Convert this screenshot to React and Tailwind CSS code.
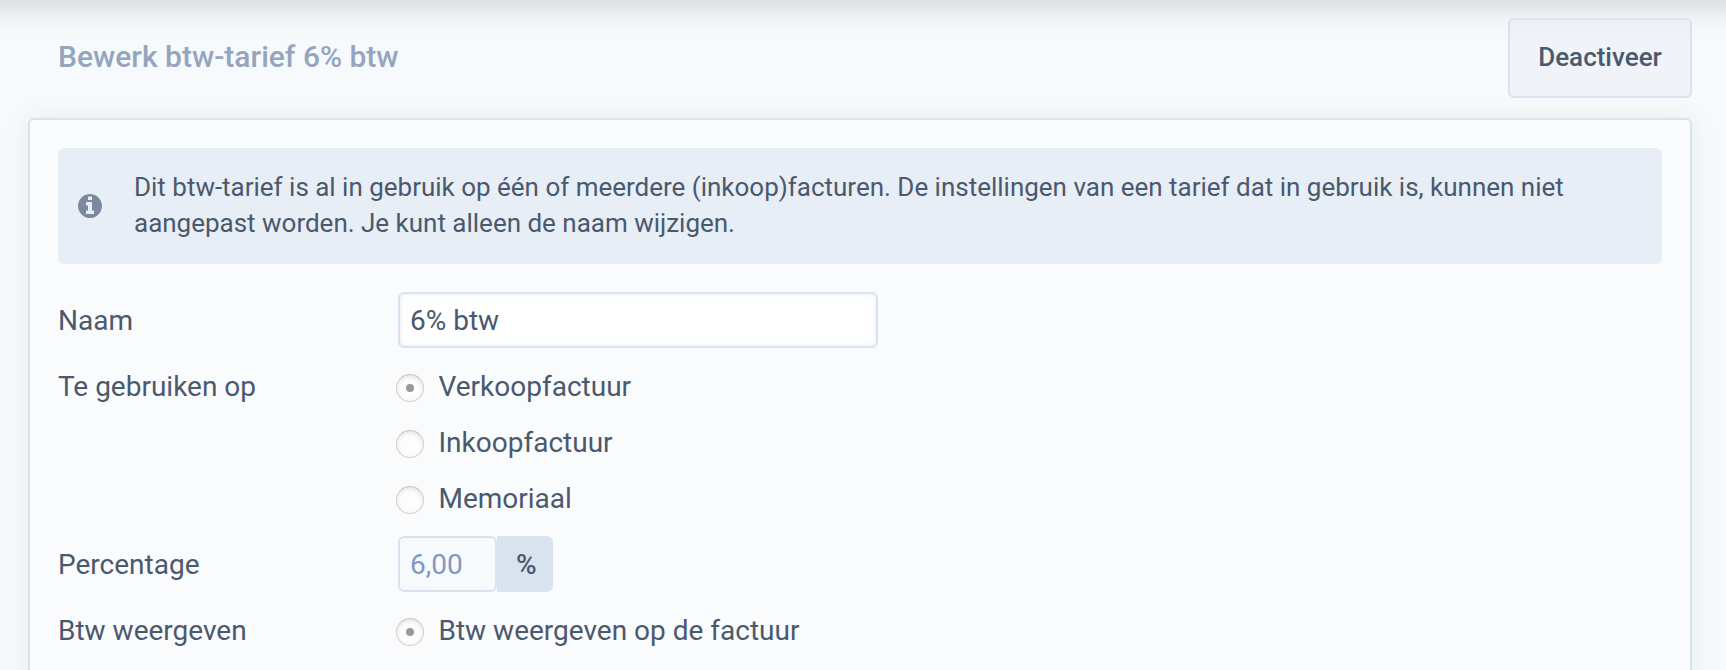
function InfoIcon() {
  return (
    <svg className="size-6 shrink-0 fill-[#7b899f]" viewBox="128 128 1536 1536" aria-hidden="true">
      <path d="M1152 1376v-160q0-14-9-23t-23-9h-96v-512q0-14-9-23t-23-9h-320q-14 0-23 9t-9 23v160q0 14 9 23t23 9h96v320h-96q-14 0-23 9t-9 23v160q0 14 9 23t23 9h448q14 0 23-9t9-23zm-128-896v-160q0-14-9-23t-23-9h-192q-14 0-23 9t-9 23v160q0 14 9 23t23 9h192q14 0 23-9t9-23zm640 416q0 209-103 385.5t-279.5 279.5-385.5 103-385.5-103-279.5-279.5-103-385.5 103-385.5 279.5-279.5 385.5-103 385.5 103 279.5 279.5 103 385.5z" />
    </svg>
  );
}

function Row({ label, children }) {
  return (
    <div className="flex">
      <div className="h-14 w-[340px] shrink-0 leading-[58px]">{label}</div>
      <div>{children}</div>
    </div>
  );
}

function Radio({ label, checked = false }) {
  return (
    <label className="flex h-14 items-center">
      <span className="-ml-0.5 mt-1 mr-[14.5px] flex size-7 items-center justify-center rounded-full border border-[#d0d0d0] border-t-[#c4c4c4] bg-[#fdfdfd] shadow-[inset_0_2px_4px_rgba(0,0,0,0.1)]">
        {checked && <span className="size-2 rounded-full bg-[#999999]" />}
      </span>
      <span className="h-14 leading-[58px]">{label}</span>
    </label>
  );
}

export default function App() {
  return (
    <div className="h-[670px] overflow-hidden bg-[#f6fafd] bg-[linear-gradient(to_bottom,rgba(50,40,45,0.125)_0px,rgba(50,45,50,0.1)_6px,rgba(55,55,55,0.055)_14px,rgba(60,60,60,0.022)_24px,transparent_38px)] pt-[18px] pr-[34px] pl-7 font-['Roboto',sans-serif] text-[28px] text-[#4a596d]">
      <header className="flex h-20 items-center justify-between pl-[30px]">
        <h1 className="pb-0.5 text-[30px] leading-9 font-medium text-[#95a5bd]">Bewerk btw-tarief 6% btw</h1>
        <button className="h-20 w-[184px] rounded-md border-2 border-[#d9e2f0] bg-linear-to-b from-[#edeff4] to-[#f0f3f8] to-30% pb-0.5 text-[26px] font-medium">
          Deactiveer
        </button>
      </header>

      <main className="mt-5 h-[700px] rounded-md border-2 border-[#d9e3f0] bg-[#fafbfd] p-7 shadow-[0_0_24px_rgba(90,110,110,0.1)]">
        <div className="flex h-[116px] items-center rounded-md bg-[#e7eef6] pl-5 text-[26px] leading-9 tracking-[-0.01px]">
          <InfoIcon />
          <p className="ml-8 w-[1450px] pb-0.5">
            Dit btw-tarief is al in gebruik op één of meerdere (inkoop)facturen. De instellingen van een tarief dat in gebruik is, kunnen niet aangepast worden. Je kunt alleen de naam wijzigen.
          </p>
        </div>

        <form className="mt-7 flex flex-col gap-2.5">
          <Row label="Naam">
            <input
              className="block h-14 w-[480px] rounded-md border-2 border-[#d9e3f0] bg-white px-2.5 shadow-[inset_0_0_4px_rgba(0,0,0,0.1)] outline-none"
              defaultValue="6% btw"
            />
          </Row>
          <Row label="Te gebruiken op">
            <Radio label="Verkoopfactuur" checked />
            <Radio label="Inkoopfactuur" />
            <Radio label="Memoriaal" />
          </Row>
          <Row label="Percentage">
            <div className="flex">
              <input
                className="block h-14 w-[99px] rounded-md border-2 border-[#d9e3f0] bg-[#f6fafd] px-2.5 text-[#8199bf] opacity-100 outline-none"
                defaultValue="6,00"
                disabled
              />
              <span className="h-14 w-14 rounded-r-md bg-[#d9e3ef] pl-[19px] text-[28px] leading-[58px] font-medium">%</span>
            </div>
          </Row>
          <Row label="Btw weergeven">
            <Radio label="Btw weergeven op de factuur" checked />
          </Row>
        </form>
      </main>
    </div>
  );
}
